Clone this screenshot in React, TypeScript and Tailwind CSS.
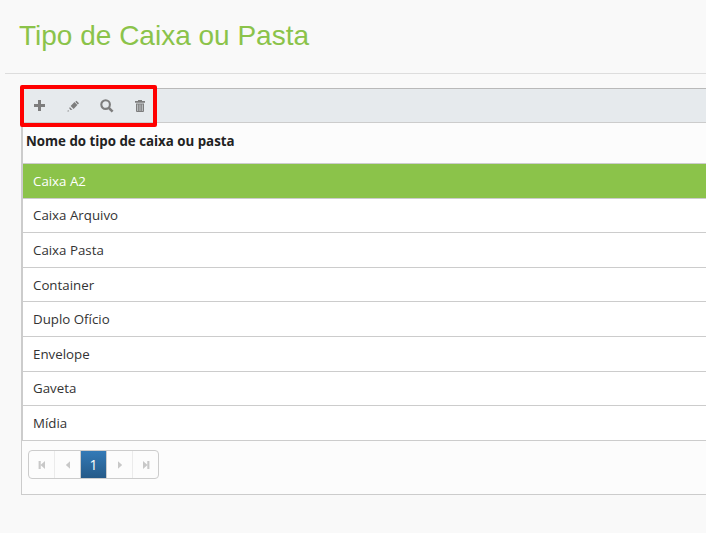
const rows = [
  { name: 'Caixa A2', height: 'h-[35px]', pad: 'pt-[8px]' },
  { name: 'Caixa Arquivo', height: 'h-[34px]', pad: 'pt-[7px]' },
  { name: 'Caixa Pasta', height: 'h-[35px]', pad: 'pt-[8px]' },
  { name: 'Container', height: 'h-[34px]', pad: 'pt-[8px]' },
  { name: 'Duplo Ofício', height: 'h-[35px]', pad: 'pt-[8px]' },
  { name: 'Envelope', height: 'h-[35px]', pad: 'pt-[8px]' },
  { name: 'Gaveta', height: 'h-[34px]', pad: 'pt-[7px]' },
  { name: 'Mídia', height: 'h-[35px]', pad: 'pt-[8px]' },
];

function PlusIcon() {
  return (
    <svg width="11" height="11" viewBox="0 0 11 11" fill="#7d7d7d">
      <path d="M4 0h3v4h4v3H7v4H4V7H0V4h4z" />
    </svg>
  );
}

function PencilIcon() {
  return (
    <svg width="12" height="12" viewBox="0 0 12 12" fill="#7d7d7d">
      <path d="M8.3 1.8 9.4.7 12 3.3 10.8 4.4z" />
      <path d="M7.5 2.1 10.4 5 6.6 8.9 3.6 5.9z" />
      <path d="M2.7 7 5.4 9.7 3.6 10 2.4 8.8z" />
      <path d="M1 10 2.2 11.2.4 11.6z" />
    </svg>
  );
}

function SearchIcon() {
  return (
    <svg width="14" height="14" viewBox="0 0 14 14" fill="none" stroke="#7d7d7d">
      <circle cx="5.6" cy="5.6" r="4.3" strokeWidth="2.1" />
      <path d="M8.8 8.8 12.6 12.6" strokeWidth="2.6" />
    </svg>
  );
}

function TrashIcon() {
  return (
    <svg width="10" height="12" viewBox="0 0 10 12">
      <path d="M3 0h4v1h3v1.8H0V1h3z" fill="#7d7d7d" />
      <path d="M1 3.6h8V11q0 1-1 1H2q-1 0-1-1z" fill="#7d7d7d" />
      <path d="M2.7 4.4V11M5 4.4V11M7.3 4.4V11" stroke="#d0d4d7" strokeWidth=".9" />
    </svg>
  );
}

function PageArrow({ back = false, end = false }: { back?: boolean; end?: boolean }) {
  return (
    <svg
      width="8"
      height="8"
      viewBox="0 0 8 8"
      fill="#c8c8c8"
      className={back ? '-scale-x-100' : ''}
    >
      {end ? <path d="M1 0 5.5 4 1 8zM5.3 0H7.4V8H5.3z" /> : <path d="M2 .2 6.2 4 2 7.8z" />}
    </svg>
  );
}

export default function App() {
  return (
    <div className="h-[533px] w-[706px] overflow-hidden bg-[#f9f9f9] font-['Open_Sans','Noto_Sans',sans-serif] text-[13.3px] text-[#333]">
      <header className="ml-[5px] flex h-[74px] items-start border-b border-[#dddddd] pt-[19px] pl-[14px]">
        <h1 className="font-['Liberation_Sans',Arial,sans-serif] text-[28px] leading-[34px] whitespace-nowrap text-[#8bc34a]">
          Tipo de Caixa ou Pasta
        </h1>
      </header>

      <main className="mt-[14px] ml-[21px] h-[407px] border-y border-l border-[#ccc] border-t-[#b9b9b9] bg-[#fcfcfc]">
        <div className="relative flex h-[34px] items-center border-b border-[#ccc] bg-[#e6eaed]">
          <div className="flex w-[135px] items-center">
            <button className="flex w-[34px] justify-center"><PlusIcon /></button>
            <button className="flex w-[34px] justify-center"><PencilIcon /></button>
            <button className="flex w-[33px] justify-center"><SearchIcon /></button>
            <button className="flex w-[34px] justify-center"><TrashIcon /></button>
          </div>
          <div className="absolute -top-[4px] -left-[2px] h-[42px] w-[137px] rounded-[2px] border-4 border-[#ff0000]" />
        </div>

        <div className="border-l border-[#ccc]">
          <div className="flex h-[41px] items-start border-b border-[#ccc] pt-[9px] pl-[3px] font-bold leading-[19px] text-[#222] whitespace-nowrap">
            Nome do tipo de caixa ou pasta
          </div>
          {rows.map((row, i) => (
            <div
              key={row.name}
              className={`flex items-start border-b border-[#ccc] pl-[10px] leading-[19px] whitespace-nowrap ${row.pad} ${row.height} ${
                i === 0 ? 'bg-[#8bc34a] text-white' : 'bg-white'
              }`}
            >
              {row.name}
            </div>
          ))}
        </div>

        <nav className="mt-[9px] ml-[6px] flex h-[29px] w-[131px] overflow-hidden rounded-[4px] border border-[#ccc]">
          <span className="flex w-[26px] items-center justify-center border-r border-[#ebebeb]"><PageArrow back end /></span>
          <span className="flex w-[26px] items-center justify-center border-r border-[#ccc]"><PageArrow back /></span>
          <span className="flex w-[26px] items-center justify-center border-r border-[#ccc] bg-linear-to-b from-[#337ab7] to-[#265a88] text-sm text-white">1</span>
          <span className="flex w-[26px] items-center justify-center border-r border-[#ebebeb]"><PageArrow /></span>
          <span className="flex w-[25px] items-center justify-center"><PageArrow end /></span>
        </nav>
      </main>
    </div>
  );
}
